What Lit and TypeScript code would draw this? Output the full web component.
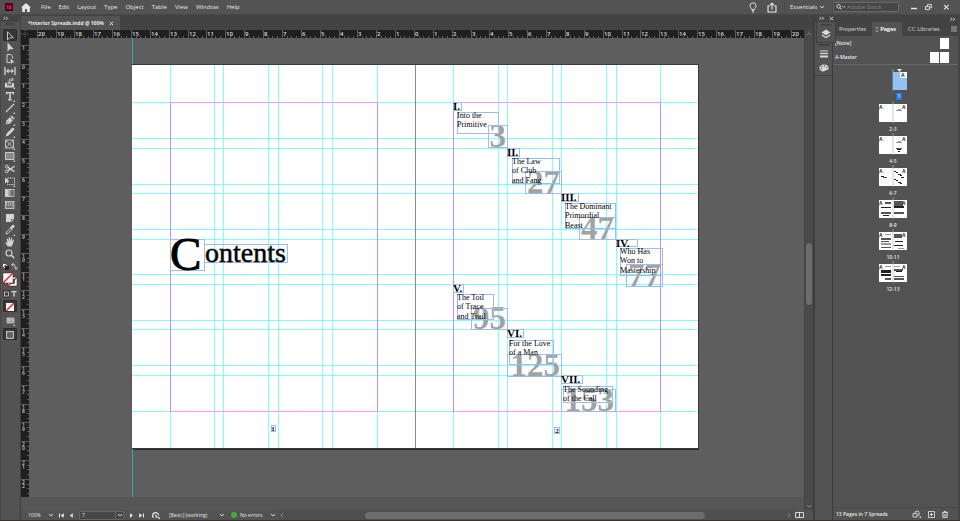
import { LitElement, html, svg, css, nothing } from "lit";
import { customElement } from "lit/decorators.js";

/* ---------- icons ---------- */

const flyout = svg`<path d="M11 10v2H9z" fill="currentColor"/>`;

const toolIcons: Record<string, unknown> = {
  Selection: svg`<path d="M3.5 1.8v8.2l2.2-2.1 3.6-.3z" fill="none" stroke="currentColor" stroke-width=".9"/>`,
  "Direct Selection": svg`<path d="M3.5 1.2v9.2l2.3-2.2h3.9z" fill="currentColor"/>`,
  Page: svg`<path d="M3 1.5h3.8l1.7 1.8v2M3 1.5v8h3" fill="none" stroke="currentColor"/><path d="M6.6 5.5v5.6l1.6-1.5h2.4z" fill="currentColor"/>`,
  Gap: svg`<path d="M1 2v8M11 2v8" stroke="currentColor" stroke-width="1.3"/><path d="M3 6h6" stroke="currentColor" stroke-width="1.2"/><path d="M4.6 3.6v4.8L2 6zM7.4 3.6v4.8L10 6z" fill="currentColor"/>`,
  "Content Collector": svg`<path d="M1 6h2v2.4h5V6h2v4.6H1z" fill="currentColor"/><path d="M3.6 4.4h3.6v3H3.6z" fill="currentColor" opacity=".7"/><path d="M5 3.8C5 2 7 1.4 8.6 2.4M8.8 .8v2.6H6.6" fill="none" stroke="currentColor" stroke-width=".9"/>${flyout}`,
  Type: svg`<path d="M2 2h8v2.4H9L8.6 3.3H6.8v6l1.2.3v.8H4v-.8l1.2-.3v-6H3.4L3 4.4H2z" fill="currentColor"/>${flyout}`,
  Line: svg`<path d="M2 10l8-8" stroke="currentColor" stroke-width="1.1"/>${flyout}`,
  Pen: svg`<path d="M1.6 10.6l1-4.4 3.2-3 3 3-3 3.4zM6.4 2.6l1.2-1.2 3 3-1.2 1.2z" fill="currentColor"/><path d="M1.6 10.6l3.2-3.4" stroke="#535353" stroke-width=".6"/>${flyout}`,
  Pencil: svg`<path d="M1.8 10.4l.8-2.9L8 2.1q.9-.8 1.8 0t.1 1.9L4.6 9.5z" fill="currentColor"/>${flyout}`,
  "Rectangle Frame": svg`<path d="M1.5 2h8v8h-8zM1.5 2l8 8M9.5 2l-8 8" fill="none" stroke="currentColor" stroke-width=".9"/>${flyout}`,
  Rectangle: svg`<path d="M1.5 2.5h8.5v7H1.5z" fill="#8a8a8a" stroke="currentColor" stroke-width=".9"/>${flyout}`,
  Scissors: svg`<path d="M4 4.4l6.6 4.4M4 7.6l6.6-4.4" stroke="currentColor" stroke-width="1.3"/><circle cx="2.8" cy="3.6" r="1.4" fill="none" stroke="currentColor"/><circle cx="2.8" cy="8.4" r="1.4" fill="none" stroke="currentColor"/>`,
  "Free Transform": svg`<path d="M3.5 3h7v6.5h-7z" fill="none" stroke="currentColor" stroke-dasharray="1.4 .8"/><path d="M1 2.4v6l1.8-1.6h2.8z" fill="currentColor"/>${flyout}`,
  "Gradient Swatch": svg`<rect x="1.5" y="2.5" width="8.5" height="7" fill="url(#ramp)" stroke="currentColor" stroke-width=".8"/>`,
  "Gradient Feather": svg`<rect x="1.5" y="2.5" width="8.5" height="7" fill="#777" stroke="currentColor" stroke-width=".8"/><path d="M2 4h8M2 6h8" stroke="currentColor" stroke-dasharray="1 1"/>`,
  Note: svg`<path d="M2 2h8v5.6L7.6 10H2z" fill="currentColor"/><path d="M7.4 9.8V7.4H10" fill="none" stroke="#535353" stroke-width=".7"/>`,
  Eyedropper: svg`<path d="M2 10l.6-2L6.4 4.2l1.4 1.4L4 9.4z" fill="none" stroke="currentColor" stroke-width=".9"/><path d="M5.8 3.4l1-.6 1.4-1.6q1.2-.8 2 0t0 2L8.6 4.6 8.2 5.6z" fill="currentColor"/>${flyout}`,
  Hand: svg`<path d="M3.8 10.6L1.4 6.8q-.2-.9.8-.6l1.2 1L2.8 3q.5-1 1.2 0l.8 2.6-.1-4q.6-.9 1.2 0l.4 3.9.8-3.5q.7-.7 1.1.2L7.8 6l1.1-2.2q.8-.5 1 .4L8.6 8.6l-1 2z" fill="currentColor"/>`,
  Zoom: svg`<circle cx="5" cy="5" r="3" fill="none" stroke="currentColor" stroke-width="1.1"/><path d="M7.3 7.3l3 3" stroke="currentColor" stroke-width="1.4"/>`,
};

const toolGroups = [
  ["Selection", "Direct Selection", "Page", "Gap", "Content Collector"],
  ["Type", "Line", "Pen", "Pencil", "Rectangle Frame", "Rectangle"],
  ["Scissors", "Free Transform", "Gradient Swatch", "Gradient Feather"],
  ["Note", "Eyedropper", "Hand", "Zoom"],
];

const icon = (w: number, h: number, body: unknown) =>
  html`<svg width=${w} height=${h} viewBox="0 0 ${w} ${h}" aria-hidden="true">${body}</svg>`;

const chevron = icon(6, 6, svg`<path d="M1 2l2 2 2-2" fill="none" stroke="currentColor" stroke-width=".9"/>`);
const expand = icon(6, 5, svg`<path d="M.6.8L2 2.3.6 3.8M3.2.8l1.4 1.5-1.4 1.5" fill="none" stroke="currentColor" stroke-width=".9"/>`);
const cross = icon(5, 5, svg`<path d="M.8.8l3.4 3.4M4.2.8L.8 4.2" stroke="currentColor"/>`);

/* ---------- document data ---------- */

const UNIT = 566 / 30;
const columns = [170, 214, 223, 268, 278, 322, 332, 377, 453, 498, 507, 552, 561, 606, 616, 660];
const rows = [102, 138, 148, 184, 193, 229, 239, 274, 284, 320, 329, 365, 375, 411];

type Box = [x: number, y: number, w: number, h: number];
interface Chapter {
  numeral: string;
  label: Box;
  lines: string[];
  title: Box;
  page: string;
  folio: Box;
}

const chapters: Chapter[] = [
  { numeral: "I.", label: [453, 102, 8, 8], lines: ["Into the", "Primitive"], title: [457, 112, 41, 21], page: "3", folio: [488, 125, 19, 22] },
  { numeral: "II.", label: [507, 148, 12, 8], lines: ["The Law", "of Club", "and Fang"], title: [512, 158, 47, 25], page: "27", folio: [525, 171, 36, 22] },
  { numeral: "III.", label: [561, 193, 17, 8], lines: ["The Dominant", "Primordial", "Beast"], title: [565, 203, 50, 25], page: "47", folio: [579, 217, 36, 22] },
  { numeral: "IV.", label: [616, 239, 21, 7], lines: ["Who Has", "Won to", "Mastership"], title: [620, 248, 42, 27], page: "77", folio: [626, 264, 36, 22] },
  { numeral: "V.", label: [453, 284, 10, 8], lines: ["The Toil", "of Trace", "and Trail"], title: [457, 294, 36, 25], page: "95", folio: [471, 308, 36, 21] },
  { numeral: "VI.", label: [507, 329, 16, 8], lines: ["For the Love", "of a Man"], title: [509, 340, 44, 24], page: "125", folio: [507, 354, 54, 22] },
  { numeral: "VII.", label: [561, 375, 21, 8], lines: ["The Sounding", "of the Call"], title: [563, 386, 49, 16], page: "153", folio: [561, 389, 54, 22] },
];

const frame = ([x, y, w, h]: Box) => svg`<rect class="frame" x=${x} y=${y} width=${w} height=${h}/>`;

/* ---------- page thumbnails ---------- */

// Each bar: x, y, width, height, shade
type Bar = [number, number, number, number, string];
const K = "#222", G = "#999", M = "#555";

const spreads: { label: string; bars: Bar[] }[] = [
  { label: "2-3", bars: [[17, 6, 6, 1, G], [19, 5, 3, 1, G]] },
  { label: "4-5", bars: [[17, 6, 6, 1, G], [19, 5, 3, 1, G], [17, 12, 6, 1, M], [18, 13, 4, 1, K], [19, 15, 2, 1, K]] },
  { label: "6-7", bars: [[2, 8, 3, 1, K], [4, 9, 4, 1, M], [15, 3, 2, 1, K], [17, 4, 2, 1, K], [19, 6, 3, 1, K], [21, 7, 2, 1, K], [22, 9, 3, 1, K], [15, 11, 2, 1, K], [17, 12, 2, 1, K], [19, 14, 3, 1, K], [21, 15, 2, 1, K]] },
  { label: "8-9", bars: [[6, 2, 6, 2, M], [2, 7, 10, 1, K], [2, 12, 10, 2, M], [4, 15, 6, 1, K], [15, 1, 9, 5, M], [15, 6, 10, 2, K], [15, 12, 10, 2, M]] },
  { label: "10-11", bars: [[6, 2, 6, 1, G], [2, 6, 10, 2, M], [2, 9, 8, 1, M], [2, 11, 10, 2, G], [2, 15, 10, 1, M], [15, 2, 8, 4, M], [16, 9, 8, 1, K], [15, 13, 9, 1, K], [19, 16, 6, 1, G]] },
  { label: "12-13", bars: [[6, 2, 6, 1, G], [2, 6, 10, 3, K], [2, 10, 10, 2, K], [6, 14, 6, 2, M], [15, 2, 6, 1, G], [15, 5, 9, 2, M], [17, 7, 6, 1, K], [15, 12, 10, 1, M], [15, 14, 10, 2, M]] },
];

@customElement("menu-bar")
class MenuBar extends LitElement {
  static styles = css`
    :host { display: flex; align-items: center; height: 15px; background: #535353; color: #e8e8e8; font: 6px/8px "Open Sans", sans-serif; border-bottom: 1px solid #484848; box-sizing: border-box; }
    svg { display: block; }
    button, select, input { all: unset; box-sizing: border-box; }
    nav { display: flex; gap: 8px; margin-left: 10px; }
    .brand { margin: 0 8px 0 5px; display: flex; }
    .logo { width: 8px; height: 8px; background: #49021f; color: #ff3366; font-weight: 700; font-size: 5px; text-align: center; border-radius: 1px; }
    .right { margin-left: auto; display: flex; align-items: center; }
    .bulb { margin-right: 10px; }
    .rule { width: 1px; height: 10px; background: #474747; }
    .share { margin-right: 7px; }
    .space { display: flex; align-items: center; gap: 2px; margin: 0 7px 0 5px; }
    .space select { width: 27px; }
    .search { display: flex; align-items: center; gap: 1px; width: 66px; height: 10px; box-sizing: border-box; padding-left: 2px; background: #464646; border: 1px solid #6a6a6a; border-radius: 1px; }
    .search input { width: 44px; }
    .search input::placeholder { color: #858585; opacity: 1; }
    .win { display: flex; gap: 8px; margin: 0 8px 0 12px; align-items: center; }
  `;
  render() {
    return html`
      <div class="brand"><div class="logo">Id</div></div>
      <button aria-label="Home">${icon(10, 9, svg`<path d="M5 0l5 4.6H8.8V9H6V6H4v3H1.2V4.6H0z" fill="#e6e6e6"/>`)}</button>
      <nav>
        ${["File", "Edit", "Layout", "Type", "Object", "Table", "View", "Window", "Help"].map((m) => html`<button>${m}</button>`)}
      </nav>
      <div class="right">
        <button class="bulb" aria-label="Learn">${icon(8, 11, svg`<path d="M2.8 7.6C2.6 6.3 1 5.6 1 3.8a3 3 0 0 1 6 0C7 5.6 5.4 6.3 5.2 7.6z" fill="none" stroke="currentColor" stroke-width=".9"/><path d="M2.8 8.6h2.4M3 10h2" stroke="currentColor" stroke-width=".9"/>`)}</button>
        <button class="share" aria-label="Share">${icon(10, 11, svg`<path d="M3 4H1v6h8V4H7" fill="none" stroke="currentColor" stroke-width="1.1"/><path d="M5 7.6V1.4M3 3.2l2-2 2 2" fill="none" stroke="currentColor" stroke-width="1.1"/>`)}</button>
        <span class="rule"></span>
        <label class="space"><select aria-label="Workspace"><option>Essentials</option></select>${chevron}</label>
        <span class="rule"></span>
        <label class="search">${icon(10, 6, svg`<circle cx="2.6" cy="2.4" r="1.8" fill="none" stroke="currentColor" stroke-width=".9"/><path d="M4 3.8l1.6 1.8M6.6 2.2l1.2 1.2L9 2.2" fill="none" stroke="currentColor" stroke-width=".9"/>`)}<input aria-label="Search Adobe Stock" placeholder="Adobe Stock" /></label>
        <div class="win">
          <button aria-label="Minimize">${icon(6, 6, svg`<path d="M0 4.5h6" stroke="currentColor" stroke-width="1.4"/>`)}</button>
          <button aria-label="Restore">${icon(7, 7, svg`<path d="M.5 2.5h4v3h-4zM2.4 2.4v-2h4v3.4H4.8" fill="none" stroke="currentColor" stroke-width=".9"/>`)}</button>
          <button aria-label="Close">${icon(12, 6, svg`<path d="M4 .8l4.600 4.600M8.600 .8L4 5.400" stroke="currentColor" stroke-width="1.1"/>`)}</button>
        </div>
      </div>`;
  }
}

@customElement("tool-bar")
class ToolBar extends LitElement {
  static styles = css`
    :host { display: flex; flex-direction: column; width: 21px; box-sizing: border-box; background: #535353; color: #d4d4d4; border-left: 1px solid #474747; border-right: 1px solid #3d3d3d; padding-right: 1px; align-items: center; }
    svg { display: block; }
    button { all: unset; display: grid; place-items: center; height: 12px; width: 14px; box-sizing: border-box; }
    .top { align-self: stretch; height: 7px; background: #434343; padding: 1px 0 0 2px; box-sizing: border-box; }
    .grip { width: 10px; height: 2px; background: #434343; margin: 1px 0 4px; }
    .group { display: flex; flex-direction: column; }
    .group + .group { border-top: 1px solid #484848; }
    .on { background: #363636; border: 1px solid #2c2c2c; border-radius: 1px; }
    .tall { height: 14px; }
    .stack { display: flex; flex-direction: column; align-items: center; gap: 1px; }
  `;
  render() {
    return html`
      <div class="top">${expand}</div>
      <div class="grip"></div>
      ${toolGroups.map((g) => html`<div class="group">${g.map((name) => html`
        <button class=${name === "Selection" ? "on" : ""} aria-label="${name} Tool">
          ${icon(12, 12, svg`${name === "Gradient Swatch" ? svg`<defs><linearGradient id="ramp"><stop stop-color="#eee"/><stop offset="1" stop-color="#444"/></linearGradient></defs>` : nothing}${toolIcons[name]}`)}
        </button>`)}</div>`)}
      <div class="stack">
        ${icon(16, 11, svg`<rect x="1" y="4" width="4" height="4" fill="#eee"/><path d="M3 6h4v4H3z" fill="#222"/><path d="M1 8l4-4" stroke="#d22"/><path d="M10 4.500q4-.5 4 4M11.600 2.600l-2 2 2 1.800M12.400 7.500l1.600 2 1.400-2" fill="none" stroke="currentColor" stroke-width=".9"/>`)}
        ${icon(16, 16, svg`<path d="M6 5h9v9H6z" fill="#fff" stroke="#222" stroke-width=".5"/><path d="M6 14l9-9" stroke="#e11" stroke-width="1.3"/><path d="M8.500 7.500h4v4h-4z" fill="#535353" stroke="#222" stroke-width=".5"/><path d="M1 1h10v10H1z" fill="#fff" stroke="#222" stroke-width=".5"/><path d="M1 11L11 1" stroke="#e11" stroke-width="1.300"/>`)}
        ${icon(16, 10, svg`<rect x="1" y="1" width="7" height="8" fill="#3a3a3a"/><rect x="2.500" y="3" width="4" height="4" fill="none" stroke="currentColor" stroke-width=".8"/><path d="M9.500 2h5v1.600h-.8L12.700 3v4.600h-1.400V3l-1 .6h-.8z" fill="currentColor"/>`)}
        <button class="on" aria-label="Apply None">${icon(12, 12, svg`<rect x="2" y="2" width="8" height="8" fill="#fff"/><path d="M2 10l8-8" stroke="#e11" stroke-width="1.300"/>`)}</button>
        <button class="tall" aria-label="View Options">${icon(12, 12, svg`<path d="M3 4h7v5H3zM3 6h7M5 4v5" fill="#999" stroke="currentColor" stroke-width=".7"/>${flyout}`)}</button>
        <button class="on" aria-label="Screen Mode">${icon(12, 12, svg`<rect x="2.500" y="2.500" width="7" height="7" fill="#888" stroke="currentColor" stroke-width=".8"/><path d="M4 4h4v4H4zM4 6h4" fill="none" stroke="#333" stroke-width=".7"/>`)}</button>
      </div>`;
  }
}

@customElement("document-view")
class DocumentView extends LitElement {
  static styles = css`
    :host { display: grid; grid-template-columns: 8px minmax(0, 1fr) 9px; grid-template-rows: 15px 8px minmax(0, 1fr) 13px 10px; background: #565656; color: #e6e6e6; font: 5px/8px "Open Sans", sans-serif; min-width: 0; }
    svg { display: block; }
    button, select, input { all: unset; box-sizing: border-box; }
    .tabs { grid-column: 1 / -1; background: #434343; display: flex; align-items: flex-end; }
    .tab { display: flex; align-items: center; gap: 5px; height: 14px; padding: 0 6px 0 7px; background: #535353; font-weight: 700; }
    .corner, .hr, .vr { background: #1f1f1f; }
    .corner { display: grid; place-items: center; }
    .hr, .vr { overflow: hidden; }
    .vr { grid-row: 3; }
    .sheet { grid-row: 3; grid-column: 2; background: #5e5e5e; min-height: 0; overflow: hidden; }
    .sheet svg { width: 100%; height: 100%; }
    .num { font: 600 6px "Open Sans", sans-serif; fill: #dcdcdc; }
    .vnum { font: 600 5px "Open Sans", sans-serif; fill: #c4c4c4; }
    .tick { fill: #5c5c5c; }
    .guide { fill: #80ffff; shape-rendering: crispEdges; }
    .serif { font-family: "Liberation Serif", serif; fill: #000; }
    .initial { font-size: 47px; stroke: #000; stroke-width: 1px; }
    .head { font-size: 28px; stroke: #000; stroke-width: 1px; stroke-opacity: .5; }
    .numeral { font-size: 11px; font-weight: 700; }
    .line { font-size: 8px; }
    .folio { font-size: 33px; font-weight: 700; fill: #a2a2a2; }
    .small { font-size: 7px; font-weight: 700; text-anchor: middle; }
    .frame { fill: none; stroke: #9dbdec; shape-rendering: crispEdges; }
    .vs { grid-column: 3; grid-row: 2 / 5; background: #4a4a4a; border-left: 1px solid #444; display: flex; flex-direction: column; align-items: center; color: #909090; padding: 1px 0; }
    .track { flex: 1; align-self: stretch; display: flex; align-items: center; }
    .vs .track { flex-direction: column; }
    .before { flex-grow: var(--before); }
    .thumb { flex-grow: var(--size); background: #6c6c6c; border-radius: 4px; }
    .vs .thumb { width: 6px; }
    .after { flex-grow: var(--after); }
    .status { grid-column: 1 / -1; grid-row: 5; display: flex; align-items: center; background: #535353; padding-left: 7px; }
    .field { display: flex; align-items: center; }
    .zoom select { width: 20px; }
    .pager { display: flex; align-items: center; gap: 5px; margin: 0 8px 0 5px; }
    .page { width: 45px; height: 9px; box-sizing: border-box; background: #464646; border: 1px solid #656565; border-radius: 1px; }
    .page input { width: 36px; padding-left: 2px; border-right: 1px solid #656565; margin-right: 1px; }
    .profile select { width: 50px; margin-left: 9px; }
    .errors { margin: 0 3px 0 6px; }
    .dot { width: 6px; height: 6px; border-radius: 3px; background: #3fae3f; margin-right: 3px; }
    .errors select { width: 30px; }
    .hs { flex: 1; display: flex; align-items: center; color: #999; align-self: stretch; background: #4f4f4f; padding-right: 3px; }
    .hs .thumb { height: 7px; }
    .split { margin-right: 9px; }
  `;

  private hRuler() {
    const marks = Array.from({ length: 41 }, (_, i) => i - 20);
    return html`<svg width="100%" height="8" viewBox="29 30 775 8" role="img" aria-label="Horizontal ruler">
      ${marks.map((n) => {
        const x = Math.round(415 + n * UNIT);
        return svg`<rect class="tick" x=${x - 1} y="30" width="1" height="8"/>
          ${[5, 9, 14].map((d) => svg`<rect class="tick" x=${x + d - 1} y="36" width="1" height="2"/>`)}
          <text class="num" x=${x} y="36">${Math.abs(n)}</text>`;
      })}
    </svg>`;
  }

  private vRuler() {
    const marks = Array.from({ length: 24 }, (_, i) => i - 1);
    return html`<svg width="8" height="100%" viewBox="21 38 8 459" preserveAspectRatio="xMidYMid slice" role="img" aria-label="Vertical ruler">
      ${marks.map((n) => {
        const y = Math.round(64 + n * UNIT);
        return svg`<rect class="tick" x="21" y=${y} width="8" height="1"/>
          ${[5, 9, 14].map((d) => svg`<rect class="tick" x="27" y=${y + d} width="2" height="1"/>`)}
          ${String(Math.abs(n)).split("").map((c, i) => svg`<text class="vnum" x="22" y=${y + 5 + i * 4}>${c}</text>`)}`;
      })}
    </svg>`;
  }

  private spread() {
    return html`<svg viewBox="29 38 775 459" role="img" aria-label="Contents spread">
      <rect x="132" y="38" width="1" height="459" fill="#25b3b3"/>
      <rect x="131" y="38" width="1" height="459" fill="#6a5450"/>
      <rect x="133" y="66" width="566" height="384" fill="#2b2b2b"/>
      <rect x="132" y="64" width="567" height="385" fill="#3a3a3a"/>
      <rect x="132" y="65" width="566" height="383" fill="#fff"/>
      ${rows.map((y) => svg`<rect class="guide" x="132" y=${y} width="566" height="1"/>`)}
      ${columns.map((x) => svg`<rect class="guide" x=${x} y="65" width="1" height="383"/>`)}
      ${[170, 453].map((x) => svg`
        <rect x=${x} y="102" width="208" height="1" fill="#f79bff"/>
        <rect x=${x} y="411" width="208" height="1" fill="#f79bff"/>
        <rect x=${x} y="102" width="1" height="310" fill="#c58cff"/>
        <rect x=${x + 207} y="102" width="1" height="310" fill="#c58cff"/>`)}
      <rect x="415" y="65" width="1" height="383" fill="#8a8a8a"/>
      ${frame([170, 239, 34, 31])}${frame([204, 244, 83, 18])}
      <text class="serif initial" x="170" y="270">C</text>
      <text class="serif head" x="205" y="262">ontents</text>
      ${chapters.map((c) => svg`
        <text class="serif folio" x=${c.folio[0] + c.folio[2] - 1} y=${c.folio[1] + c.folio[3]} text-anchor="end">${c.page}</text>
        ${frame(c.label)}${frame(c.title)}${frame(c.folio)}
        <text class="serif numeral" x=${c.label[0]} y=${c.label[1] + 8}>${c.numeral}</text>
        ${c.lines.map((t, i) => svg`<text class="serif line" x=${c.title[0]} y=${c.title[1] + 6 + Math.round(i * 9.4)}>${t}</text>`)}`)}
      ${frame([271, 425, 4, 6])}${frame([554, 427, 5, 6])}
      <text class="serif small" x="273" y="431">1</text>
      <text class="serif small" x="557" y="433">2</text>
    </svg>`;
  }

  render() {
    return html`
      <div class="tabs"><div class="tab"><span>*Interior Spreads.indd @ 100%</span><button aria-label="Close document">${cross}</button></div></div>
      <div class="corner">${icon(8, 8, svg`<path d="M4 0v8M0 4h8" stroke="#666" stroke-dasharray="1 1"/>`)}</div>
      <div class="hr">${this.hRuler()}</div>
      <div class="vr">${this.vRuler()}</div>
      <div class="sheet">${this.spread()}</div>
      <div class="vs" style="--before:205;--size:62;--after:197">
        ${icon(6, 6, svg`<path d="M1 4l2-2 2 2" fill="none" stroke="currentColor" stroke-width=".8"/>`)}
        <div class="track"><i class="before"></i><i class="thumb"></i><i class="after"></i></div>
        ${chevron}
      </div>
      <div class="status">
        <label class="field zoom"><select aria-label="Zoom level"><option>100%</option></select>${chevron}</label>
        <div class="pager">
          <button aria-label="First spread">${icon(5, 5, svg`<path d="M.5.5v4" stroke="currentColor"/><path d="M4.800 .2v4.600L1.600 2.500z" fill="currentColor"/>`)}</button>
          <button aria-label="Previous spread">${icon(5, 5, svg`<path d="M3.800 .2v4.600L.8 2.500z" fill="currentColor"/>`)}</button>
          <label class="field page"><input aria-label="Page" value="7" />${chevron}</label>
          <button aria-label="Next spread">${icon(5, 5, svg`<path d="M1 .2v4.600L4 2.500z" fill="currentColor"/>`)}</button>
          <button aria-label="Last spread">${icon(5, 5, svg`<path d="M4.500.5v4" stroke="currentColor"/><path d="M.2.2v4.600L3.400 2.500z" fill="currentColor"/>`)}</button>
        </div>
        <button aria-label="Open">${icon(8, 8, svg`<path d="M1.600 6.800A3 3 0 1 1 6.600 4.500M3.400 3.600l1 2.600h2.200" fill="none" stroke="currentColor" stroke-width="1.200"/><path d="M8 6v2H6z" fill="currentColor"/>`)}</button>
        <label class="field profile"><select aria-label="Preflight profile"><option>[Basic] (working)</option></select>${chevron}</label>
        <label class="field errors"><span class="dot"></span><select aria-label="Preflight status"><option>No errors</option></select>${chevron}</label>
        <div class="hs" style="--before:80;--size:341;--after:81">
          ${icon(6, 6, svg`<path d="M4 1L2 3l2 2" fill="none" stroke="currentColor" stroke-width=".8"/>`)}
          <div class="track"><i class="before"></i><i class="thumb"></i><i class="after"></i></div>
          ${icon(6, 6, svg`<path d="M2 1l2 2-2 2" fill="none" stroke="currentColor" stroke-width=".8"/>`)}
        </div>
        <button class="split" aria-label="Split layout">${icon(9, 6, svg`<path d="M.5.5h8v5h-8zM4.500.5v5" fill="none" stroke="currentColor" stroke-width=".9"/>`)}</button>
      </div>`;
  }
}

@customElement("icon-dock")
class IconDock extends LitElement {
  static styles = css`
    :host { display: flex; flex-direction: column; width: 20px; box-sizing: border-box; background: #535353; border-left: 2px solid #3d3d3d; border-right: 1px solid #3d3d3d; color: #dadada; }
    svg { display: block; }
    button { all: unset; display: grid; place-items: center; height: 14px; width: 100%; }
    .head { height: 7px; background: #434343; }
    .float { position: relative; z-index: 1; margin-left: 2px; width: 18px; height: 20px; background: #535353; box-shadow: 0 0 0 1px #3f3f3f; display: flex; flex-direction: column; align-items: center; }
    .bar { position: absolute; z-index: 2; display: flex; gap: 4px; margin: 1px 0 0 4px; }
    .grip { width: 10px; height: 2px; background: #434343; margin: 2px auto 1px; }
    .set { border-bottom: 1px solid #434343; }
  `;
  render() {
    return html`
      <div class="head"><div class="bar">${expand}${cross}</div></div>
      <div class="float"><div class="grip"></div>
        <button aria-label="Layers">${icon(10, 10, svg`<path d="M5 .5L9.500 3.500 5 6.300.5 3.500z" fill="currentColor"/><path d="M.8 6L5 8.600 9.200 6" fill="none" stroke="currentColor" stroke-width="1.300"/>`)}</button>
      </div>
      <div class="set"><div class="grip"></div>
        <button aria-label="Stroke">${icon(10, 8, svg`<path d="M1 1h8" stroke="currentColor"/><path d="M1 3.500h8" stroke="currentColor" stroke-width="1.300"/><path d="M1 6.500h8" stroke="currentColor" stroke-width="2"/>`)}</button>
        <button aria-label="Color">${icon(10, 8, svg`<path d="M5 .5c3 0 4.600 1.400 4.600 3.200S8.400 6.200 7 6.200s-1 1.300-2.300 1.300C2 7.500.4 6 .4 4.200S2 .5 5 .5z" fill="currentColor"/><g fill="#535353"><circle cx="3" cy="2.500" r=".7"/><circle cx="5.600" cy="2" r=".7"/><circle cx="2.300" cy="4.700" r=".7"/><circle cx="7.600" cy="3.600" r=".7"/></g>`)}</button>
      </div>`;
  }
}

@customElement("pages-panel")
class PagesPanel extends LitElement {
  static styles = css`
    :host { display: flex; flex-direction: column; width: 127px; box-sizing: border-box; background: #535353; border-right: 2px solid #454545; color: #e8e8e8; font: 5px/8px "Open Sans", sans-serif; }
    svg { display: block; }
    button { all: unset; }
    .head { height: 7px; background: #434343; display: flex; justify-content: flex-end; padding: 2px 2px 0; box-sizing: border-box; }
    .tabs { display: flex; height: 14px; background: #434343; color: #c8c8c8; align-items: stretch; font: 6px/8px Lato, sans-serif; }
    .tab { display: flex; align-items: center; padding: 0 6px; gap: 1px; }
    .on { background: #535353; color: #fff; font-weight: 700; padding: 0 6px 0 3px; }
    .more { margin-left: auto; padding-right: 1px; display: flex; align-items: center; }
    .master { display: flex; justify-content: space-between; align-items: center; height: 14px; padding: 0 9px 0 2px; font-weight: 600; }
    .leaves { display: flex; gap: 1px; }
    .leaf { width: 9px; height: 11px; background: #fff; }
    .list { flex: 1; border-top: 1px solid #686868; display: flex; flex-direction: column; align-items: center; padding: 4px 5px 0 0; min-height: 0; }
    .item { display: flex; flex-direction: column; align-items: center; height: 32px; }
    .item span { height: 8px; font-weight: 600; margin-top: 2px; }
    .item .cur { background: #1f7fe8; height: 7px; line-height: 7px; padding: 0 2px; margin: 2px 0 0 12px; }
    .mk { font: 700 5px "Liberation Sans", sans-serif; fill: #222; }
    .foot { height: 13px; border-top: 1px solid #474747; display: flex; align-items: center; gap: 7px; padding: 0 10px 0 3px; font-weight: 600; box-sizing: border-box; }
    .foot span { flex: 1; }
  `;
  render() {
    return html`
      <div class="head">${expand}</div>
      <div class="tabs">
        <button class="tab">Properties</button>
        <button class="tab on">${icon(4, 7, svg`<path d="M.8 2.800L2 1l1.200 1.800M.8 4.200L2 6l1.200-1.800" fill="none" stroke="#ccc" stroke-width=".7"/>`)}Pages</button>
        <button class="tab">CC Libraries</button>
        <button class="more" aria-label="Panel menu">${icon(6, 6, svg`<path d="M0 1h6M0 3h6M0 5h6" stroke="currentColor" stroke-width=".8"/>`)}</button>
      </div>
      <div class="master"><span>[None]</span><div class="leaves"><i class="leaf"></i></div></div>
      <div class="master"><span>A-Master</span><div class="leaves"><i class="leaf"></i><i class="leaf"></i></div></div>
      <div class="list">
        <div class="item">
          ${icon(28, 22, svg`<path d="M14 0v22" stroke="#999"/><path d="M18 0h5l-2.500 3z" fill="#eee"/><rect x="14" y="3" width="14" height="18" fill="#93c1f5"/><rect x="21" y="3" width="7" height="6" fill="#fff"/><text class="mk" x="22" y="8">A</text>`)}
          <span class="cur">1</span>
        </div>
        ${spreads.map((s) => html`<div class="item">
          ${icon(28, 22, svg`<path d="M14 0v22" stroke="#999"/><rect y="3" width="28" height="18" fill="#fff"/><path d="M14 3v18" stroke="#ccc" stroke-width="1"/>
            ${s.bars.map(([x, y, w, h, c]) => svg`<rect x=${x} y=${y + 3} width=${w} height=${h} fill=${c}/>`)}
            <text class="mk" x="0" y="8">A</text><text class="mk" x="23" y="8">A</text>`)}
          <span>${s.label}</span>
        </div>`)}
      </div>
      <div class="foot"><span>13 Pages in 7 Spreads</span>
        <button aria-label="Edit page size">${icon(9, 8, svg`<path d="M1 3.500h4v3.500H1zM3.400 3.400V1.500l3-.5 1 4-2 .6" fill="none" stroke="currentColor" stroke-width=".8"/><path d="M9 6v2H7z" fill="currentColor"/>`)}</button>
        <button aria-label="New page">${icon(7, 7, svg`<path d="M.5.5h6v6h-6z" fill="none" stroke="currentColor" stroke-width=".8"/><path d="M3.500 2v3M2 3.500h3" stroke="currentColor" stroke-width=".9"/>`)}</button>
        <button aria-label="Delete page">${icon(6, 7, svg`<path d="M0 1.500h6M2 1.500V.5h2v1M.8 2v4.500h4.400V2M2.200 3v2.600M3.800 3v2.600" fill="none" stroke="currentColor" stroke-width=".8"/>`)}</button>
      </div>`;
  }
}

@customElement("app-root")
class AppRoot extends LitElement {
  static styles = css`
    :host { display: flex; flex-direction: column; height: 100vh; background: #3a302d; overflow: hidden; }
    main { flex: 1; min-height: 0; display: grid; grid-template-columns: auto minmax(0, 1fr) auto auto; margin-bottom: 1px; }
  `;
  render() {
    return html`
      <menu-bar></menu-bar>
      <main>
        <tool-bar></tool-bar>
        <document-view></document-view>
        <icon-dock></icon-dock>
        <pages-panel></pages-panel>
      </main>`;
  }
}
